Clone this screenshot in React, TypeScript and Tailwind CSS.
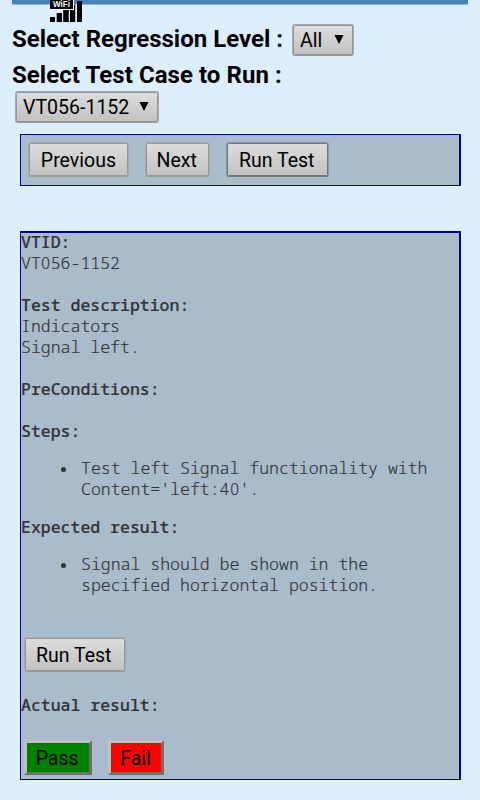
import type { ReactNode } from 'react';

const buttonFace =
  'flex items-center border rounded-[3px] bg-linear-to-b from-[#dddddd] to-[#c1c1c1] leading-none whitespace-pre text-black';
const grayEdge = 'border-[#a6a8aa] border-b-[#999] shadow-[inset_0_0_0_1px_#979797]';
const darkEdge = 'border-[#8f959b] border-b-[#777] shadow-[inset_0_0_0_1px_#747474]';

function Line({ children, bold = false }: { children?: ReactNode; bold?: boolean }) {
  return (
    <div className={`h-[21px] whitespace-pre [-webkit-text-stroke:0.2px_#333] ${bold ? 'font-medium' : 'font-light'}`}>
      {children}
    </div>
  );
}

/* Zero without a slash, in a cell as wide as the monospaced ones. */
function Zero() {
  return (
    <span className="inline-block w-[9.9px] text-center font-['Noto_Sans',sans-serif] leading-[20px]">
      <span className="inline-block scale-x-[0.93]">0</span>
    </span>
  );
}

function Bullet({ children }: { children: ReactNode }) {
  return (
    <div className="flex pl-[40px]">
      <span className="mt-[10px] mr-[15px] h-[5px] w-[5px] rounded-full bg-[#333]" />
      <div>{children}</div>
    </div>
  );
}

function Label({ children, left = false }: { children: ReactNode; left?: boolean }) {
  return (
    <span className={`inline-block scale-x-[0.93] pt-[1px] text-[21px] leading-none font-normal ${left ? 'origin-left' : 'pr-[1px]'}`}>
      {children}
    </span>
  );
}

function Arrow() {
  return (
    <svg width="10" height="9" viewBox="0 0 10 9" className="mb-[2px] shrink-0">
      <path d="M0.5 0H9.5L5 9Z" fill="#000" />
    </svg>
  );
}

function SignalIcon() {
  return (
    <svg className="absolute left-[50px] top-0" width="33" height="23" viewBox="0 0 33 23">
      <path d="M0 17h5v5H0zM6.7 13H12v9H6.7zM13.2 9h5.6v13h-5.6zM20 5h5.2v17H20zM27 1h5v21h-5z" fill="#000" />
      <path d="M0 0h24v10H0z" fill="#fff" />
      <path d="M0 0h23v9H0z" fill="#000" />
      <text x="3" y="7.2" fill="#fff" fontFamily="Liberation Sans, sans-serif" fontWeight="bold" fontSize="8.3" textLength="17" lengthAdjust="spacingAndGlyphs">
        WiFi
      </text>
    </svg>
  );
}

export default function App() {
  return (
    <div className="relative h-[800px] w-[480px] overflow-hidden bg-[#ddeeff] font-['Roboto',sans-serif] text-black">
      <div className="mx-[12px] h-[5px] border-b border-[#95bbdc] bg-[#4682b4]" />
      <SignalIcon />

      <div className="mt-[19px] ml-[12px] flex h-[32px]">
        <div className="mt-[1px] w-[280px] text-[24px] leading-[28px] font-bold whitespace-pre">Select Regression Level :</div>
        <div className={`${buttonFace} ${grayEdge} h-[32px] w-[62px] justify-between pr-[9px] pl-[7px]`}>
          <Label left>All</Label>
          <Arrow />
        </div>
      </div>
      <div className="mt-[5px] ml-[12px] h-[30px] text-[24px] leading-[28px] font-bold tracking-[0.06px] whitespace-pre">Select Test Case to Run :</div>
      <div className={`${buttonFace} ${grayEdge} ml-[15px] h-[32px] w-[144px] justify-between pr-[9px] pl-[7px]`}>
        <Label left>VT056-1152</Label>
        <Arrow />
      </div>

      <div className="mt-[11px] ml-[20px] flex h-[52px] w-[441px] border border-r-2 border-[#00008b] bg-[#aabbcc] pt-[7px] pl-[7px]">
        <div className={`${buttonFace} ${grayEdge} h-[35px] w-[101px] justify-center`}>
          <Label>Previous</Label>
        </div>
        <div className={`${buttonFace} ${grayEdge} ml-[16px] h-[35px] w-[65px] justify-center`}>
          <Label>Next</Label>
        </div>
        <div className={`${buttonFace} ${darkEdge} ml-[16px] h-[35px] w-[103px] justify-center`}>
          <Label>Run Test</Label>
        </div>
      </div>

      <div className="mt-[45px] ml-[20px] h-[549px] w-[441px] border-t-2 border-r-2 border-b border-l border-[#00008b] bg-[#aabbcc] font-['Noto_Sans_Mono','DejaVu_Sans_Mono',monospace] text-[16.5px] leading-[21px] text-[#333]">
        <div className="-mt-[2px]">
          <Line bold>VTID:</Line>
          <Line>
            VT
            <Zero />
            56-1152
          </Line>
          <Line />
          <Line bold>Test description:</Line>
          <Line>Indicators</Line>
          <Line>Signal left.</Line>
          <Line />
          <Line bold>PreConditions:</Line>
          <Line />
          <Line bold>Steps:</Line>
        </div>
        <div className="mt-[16px]">
          <Bullet>
            <Line>Test left Signal functionality with</Line>
            <Line>
              Content='left:4
              <Zero />
              '.
            </Line>
          </Bullet>
        </div>
        <div className="mt-[17px]">
          <Line bold>Expected result:</Line>
        </div>
        <div className="mt-[16px]">
          <Bullet>
            <Line>Signal should be shown in the</Line>
            <Line>specified horizontal position.</Line>
          </Bullet>
        </div>
        <div className={`${buttonFace} ${grayEdge} mt-[42px] ml-[3px] h-[35px] w-[102px] justify-center pr-[2px] font-['Roboto',sans-serif]`}>
          <Label>Run Test</Label>
        </div>
        <div className="mt-[22px]">
          <Line bold>Actual result:</Line>
        </div>
        <div className="mt-[25px] ml-[3px] flex gap-[16px] font-['Roboto',sans-serif] leading-none text-black">
          <div className="flex h-[35px] w-[68px] items-center justify-center border-3 border-[#c0c0c0] border-r-[#707070] border-b-[#707070] bg-[#008000]">
            <Label>Pass</Label>
          </div>
          <div className="flex h-[35px] w-[56px] items-center justify-center border-3 border-[#c0c0c0] border-r-[#707070] border-b-[#707070] bg-[#ff0000]">
            <Label>Fail</Label>
          </div>
        </div>
      </div>
    </div>
  );
}
